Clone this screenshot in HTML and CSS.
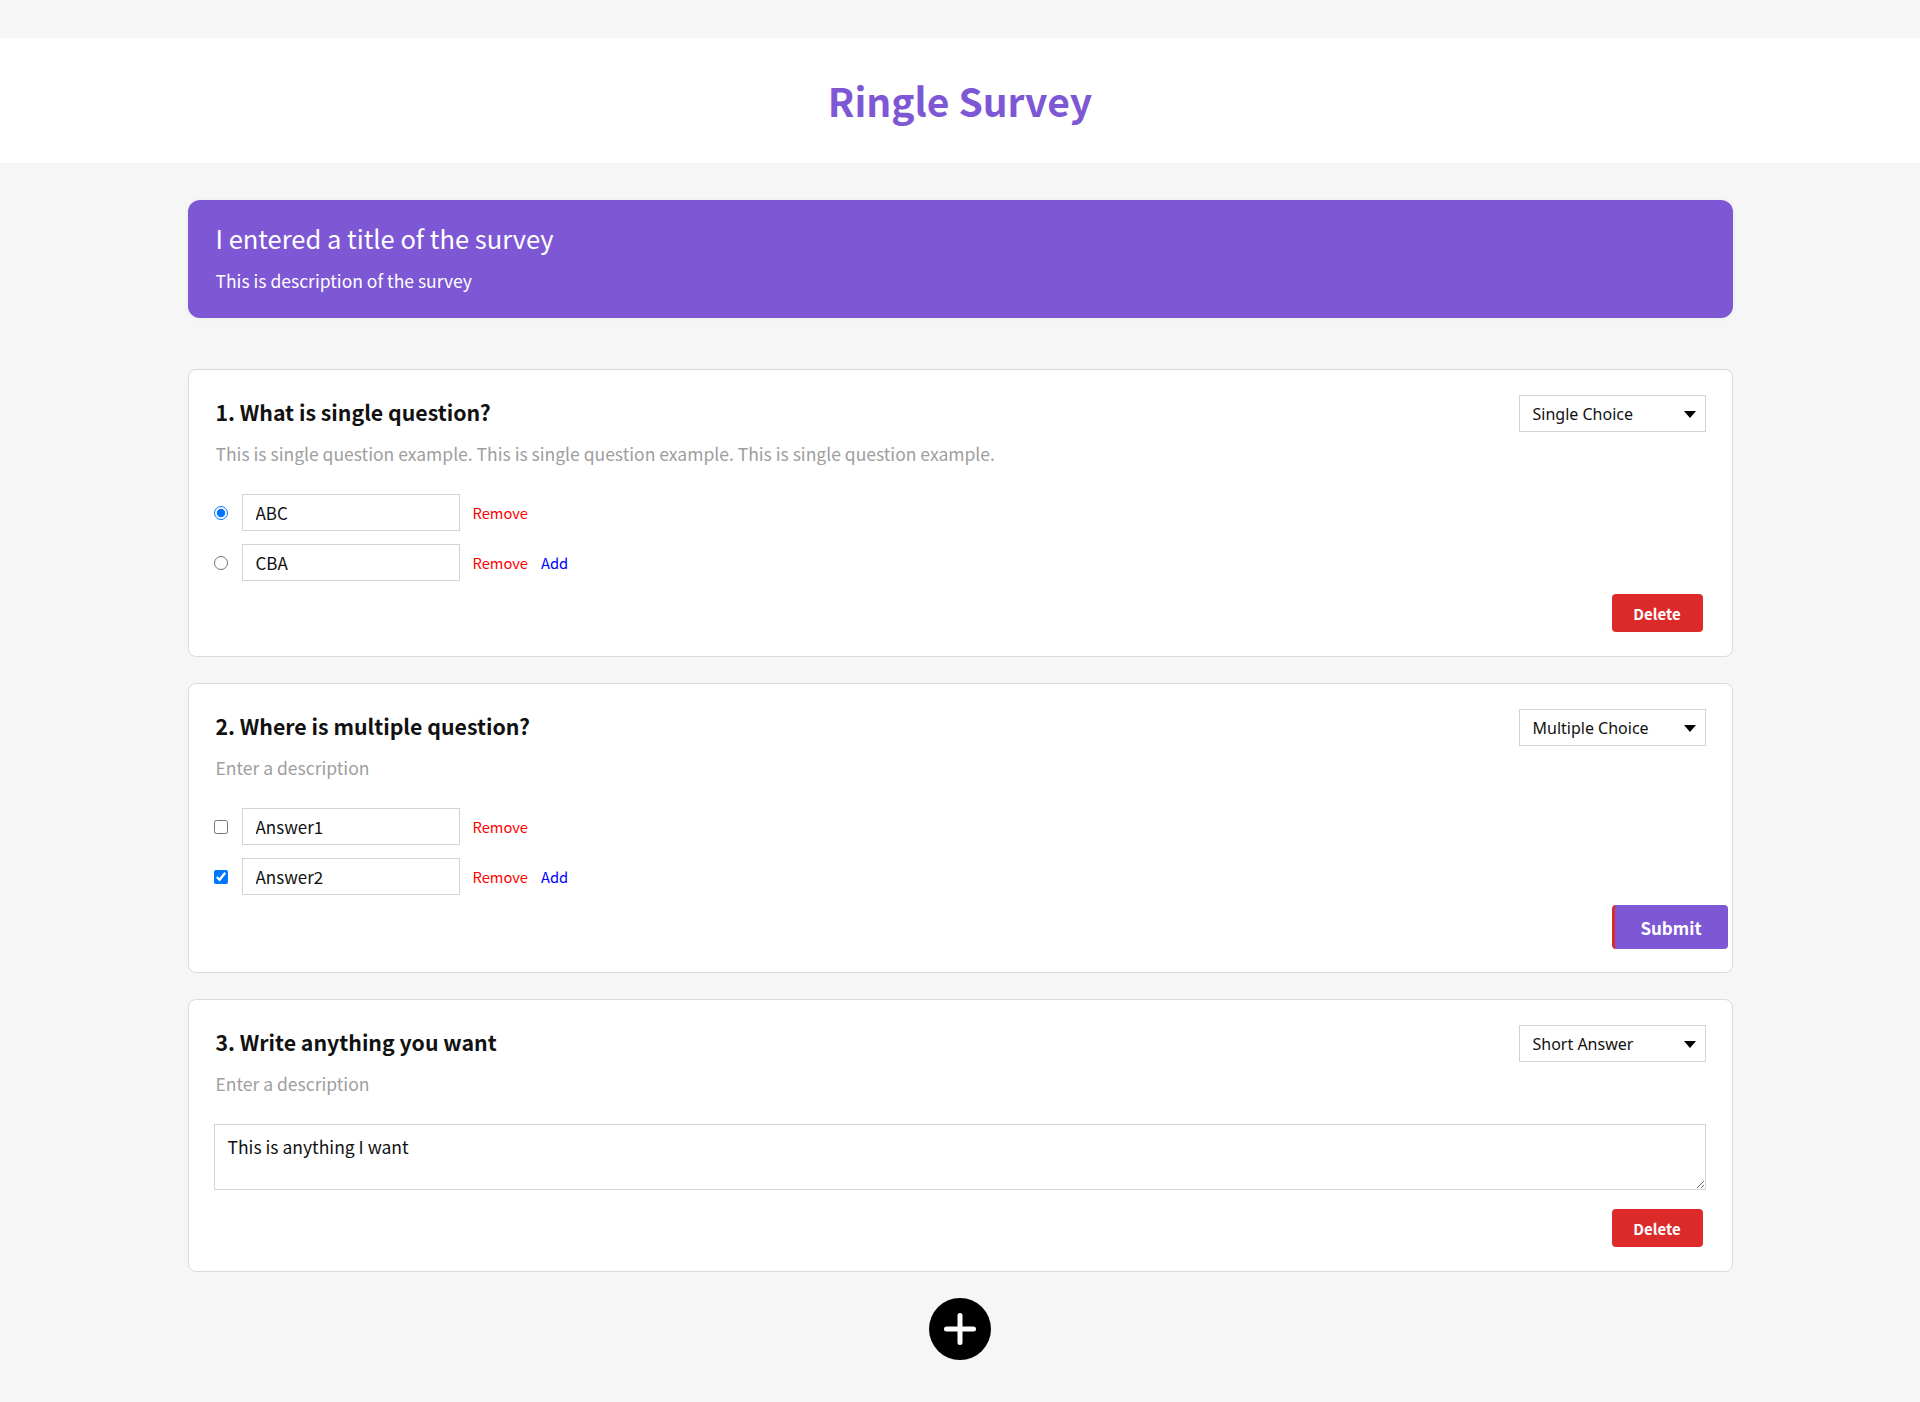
FILE: index.html
```html
<!DOCTYPE html>
<html lang="en">
<head>
<meta charset="utf-8">
<title>Ringle Survey</title>
<link rel="stylesheet" href="styles.css">
</head>
<body>
<header class="site-header">
  <h1 class="site-title">Ringle Survey</h1>
</header>
<main class="survey">
  <section class="survey-banner">
    <h2 class="survey-title">I entered a title of the survey</h2>
    <p class="survey-desc">This is description of the survey</p>
  </section>

  <section class="q-card">
    <div class="q-head">
      <div class="q-text">
        <h3 class="q-title">1. What is single question?</h3>
        <p class="q-desc">This is single question example. This is single question example. This is single question example.</p>
      </div>
      <div class="q-type">
        <select><option>Single Choice</option><option>Multiple Choice</option><option>Short Answer</option></select>
      </div>
    </div>
    <div class="q-options">
      <div class="opt">
        <input type="radio" name="q1" checked>
        <input class="opt-input" type="text" value="ABC">
        <span class="opt-link remove">Remove</span>
      </div>
      <div class="opt">
        <input type="radio" name="q1">
        <input class="opt-input" type="text" value="CBA">
        <span class="opt-link remove">Remove</span>
        <span class="opt-link add">Add</span>
      </div>
    </div>
    <div class="q-foot"><button class="btn-delete" type="button">Delete</button></div>
  </section>

  <section class="q-card">
    <div class="q-head">
      <div class="q-text">
        <h3 class="q-title">2. Where is multiple question?</h3>
        <p class="q-desc">Enter a description</p>
      </div>
      <div class="q-type">
        <select><option>Multiple Choice</option><option>Single Choice</option><option>Short Answer</option></select>
      </div>
    </div>
    <div class="q-options">
      <div class="opt">
        <input type="checkbox">
        <input class="opt-input" type="text" value="Answer1">
        <span class="opt-link remove">Remove</span>
      </div>
      <div class="opt">
        <input type="checkbox" checked>
        <input class="opt-input" type="text" value="Answer2">
        <span class="opt-link remove">Remove</span>
        <span class="opt-link add">Add</span>
      </div>
    </div>
    <div class="q-foot"><button class="btn-submit" type="button">Submit</button></div>
  </section>

  <section class="q-card">
    <div class="q-head">
      <div class="q-text">
        <h3 class="q-title">3. Write anything you want</h3>
        <p class="q-desc">Enter a description</p>
      </div>
      <div class="q-type">
        <select><option>Short Answer</option><option>Single Choice</option><option>Multiple Choice</option></select>
      </div>
    </div>
    <textarea class="q-answer">This is anything I want</textarea>
    <div class="q-foot q-foot-text"><button class="btn-delete" type="button">Delete</button></div>
  </section>

  <div class="add-row">
    <button class="btn-add" type="button" aria-label="Add question">
      <svg width="62" height="62" viewBox="0 0 62 62"><circle cx="31" cy="31" r="31" fill="#000"/><path d="M17.5 31H44.5M31 17.5V44.5" stroke="#fff" stroke-width="5" stroke-linecap="round"/></svg>
    </button>
  </div>
</main>
</body>
</html>
```
FILE: styles.css
```css
* { box-sizing: border-box; }
html, body { margin: 0; }
body {
  background: #f6f6f6;
  font-family: "Noto Sans CJK KR", "Noto Sans", sans-serif;
  color: #111;
  padding-bottom: 40px;
}
.site-header {
  margin-top: 38px;
  height: 125px;
  background: #fff;
  display: flex;
  align-items: center;
  justify-content: center;
}
.site-title {
  margin: 0;
  font-size: 39px;
  font-weight: 700;
  line-height: 1;
  color: #7e57d5;
}
.survey {
  width: 1545px;
  margin: 37px auto 0;
}
.survey-banner {
  height: 118px;
  padding: 18px 28px 0;
  background: #7e57d5;
  border-radius: 12px;
  color: #fff;
  box-shadow: 0 0 4px rgba(0, 0, 0, 0.06);
}
.survey-title {
  margin: 0;
  font-size: 25.5px;
  font-weight: 400;
  line-height: 40px;
}
.survey-desc {
  margin: 9px 0 0;
  font-size: 17.5px;
  line-height: 28px;
}
.q-card {
  margin-top: 26px;
  padding: 25px 26px 24px 25px;
  background: #fff;
  border: 1px solid #dadada;
  border-radius: 8px;
}
.survey-banner + .q-card { margin-top: 51px; }
.q-head {
  display: flex;
  justify-content: space-between;
  align-items: flex-start;
}
.q-text { padding: 1px 0 0 2px; }
.q-title {
  margin: 0;
  font-size: 21.3px;
  font-weight: 700;
  line-height: 32px;
  color: #111;
}
.q-desc {
  margin: 12px 0 0;
  font-size: 17.5px;
  line-height: 28px;
  color: #9e9e9e;
}
.q-type {
  position: relative;
  flex: none;
  width: 187px;
  height: 37px;
}
.q-type select {
  appearance: none;
  -webkit-appearance: none;
  width: 100%;
  height: 100%;
  margin: 0;
  padding: 0 0 0 13px;
  border: 1px solid #d3d3d3;
  border-radius: 0;
  background: #fff;
  font-family: "Noto Sans", sans-serif;
  font-size: 16px;
  color: #111;
}
.q-type::after {
  content: "";
  position: absolute;
  right: 10px;
  top: 16px;
  border-left: 6px solid transparent;
  border-right: 6px solid transparent;
  border-top: 7px solid #000;
  pointer-events: none;
}
.q-options {
  margin-top: 26px;
  display: flex;
  flex-direction: column;
  gap: 13px;
}
.opt {
  display: flex;
  align-items: center;
  height: 37px;
}
.opt input[type="radio"],
.opt input[type="checkbox"] {
  margin: 0;
  width: 14px;
  height: 14px;
  accent-color: #0075ff;
}
.opt-input {
  margin-left: 14px;
  width: 218px;
  height: 37px;
  padding: 0 13px;
  border: 1px solid #d3d3d3;
  font-family: "Noto Sans CJK KR", "Noto Sans", sans-serif;
  font-size: 17px;
  color: #111;
  outline: none;
}
.opt-link {
  margin-left: 13px;
  font-size: 14.7px;
  cursor: pointer;
}
.remove { color: #f00; }
.add { color: #00f; }
.q-foot {
  display: flex;
  justify-content: flex-end;
  margin-top: 13px;
}
.q-foot-text { margin-top: 19px; }
.btn-delete {
  width: 91px;
  height: 38px;
  margin-right: 3px;
  border: 0;
  border-radius: 4px;
  background: #dc2a2a;
  color: #fff;
  font-family: "Noto Sans CJK KR", "Noto Sans", sans-serif;
  font-size: 15px;
  font-weight: 700;
}
.btn-submit {
  width: 116px;
  height: 44px;
  margin: -3px -22px -1px 0;
  border: 0;
  border-left: 3px solid #dc2a2a;
  border-radius: 4px;
  background: #7e57d5;
  color: #fff;
  font-family: "Noto Sans CJK KR", "Noto Sans", sans-serif;
  font-size: 17px;
  font-weight: 700;
}
.q-answer {
  display: block;
  width: 100%;
  height: 66px;
  margin-top: 26px;
  padding: 10px 13px;
  border: 1px solid #d3d3d3;
  font-family: "Noto Sans CJK KR", "Noto Sans", sans-serif;
  font-size: 17.5px;
  line-height: 24px;
  color: #111;
  outline: none;
}
.add-row {
  display: flex;
  justify-content: center;
  margin-top: 26px;
}
.btn-add {
  width: 62px;
  height: 62px;
  padding: 0;
  border: 0;
  background: none;
  display: block;
}
.btn-add svg { display: block; }
```
